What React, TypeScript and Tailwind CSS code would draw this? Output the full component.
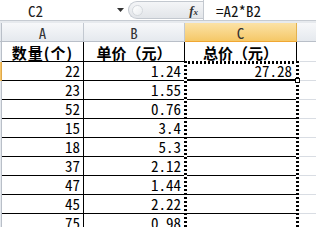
import React from "react";

const mono = "font-['Noto_Sans_Mono_CJK_SC','Liberation_Mono',monospace]";
const cjk = "font-['Noto_Sans_CJK_SC',sans-serif]";

const data = [
  ["22", "1.24", "27.28"],
  ["23", "1.55", ""],
  ["52", "0.76", ""],
  ["15", "3.4", ""],
  ["18", "5.3", ""],
  ["37", "2.12", ""],
  ["47", "1.44", ""],
  ["45", "2.22", ""],
  ["75", "0.98", ""],
];

function FormulaBar() {
  return (
    <div className="flex h-[21px] items-stretch border-b border-[#c6cbd2] bg-white">
      <div className={`flex w-[112px] items-center pl-[28px] text-[15px] leading-none text-[#222] ${mono}`}>
        C2
      </div>
      <div className="flex w-[16px] items-center justify-center">
        <svg width="7" height="4" viewBox="0 0 7 4">
          <path d="M0 0h7L3.5 4z" fill="#333" />
        </svg>
      </div>
      {/* collapsed splitter capsule + fx button */}
      <div className="my-[1px] flex w-[75px] items-center rounded-l-full border border-r-0 border-[#c3c8cf] bg-gradient-to-b from-[#f4f5f7] to-[#e2e5e9]">
        <div className="ml-[3px] h-[11px] w-[11px] rounded-full border border-[#d4d8dd] bg-gradient-to-br from-white to-[#e9ecef]" />
        <div className="flex-1" />
        <span className="mr-[5px] font-['Liberation_Serif',serif] text-[13px] font-bold italic leading-none text-[#333]">
          f<span className="text-[9px]">x</span>
        </span>
      </div>
      <div className="w-px bg-[#c3c8cf]" />
      <div className={`flex flex-1 items-center pl-[12px] text-[15px] leading-none text-[#111] ${mono}`}>
        =A2*B2
      </div>
    </div>
  );
}

function HeaderCell({ label, w, active }: { label: string; w: string; active?: boolean }) {
  return (
    <div
      className={`flex shrink-0 items-end justify-center border-r pb-[1px] text-[15px] leading-none ${mono} ${w} ${
        active
          ? "border-[#e3b24f] border-b-[#f0a732] bg-gradient-to-b from-[#fbe2a6] to-[#f5c866] text-[#333]"
          : "border-[#c2c8d0] border-b-[#b9bfc8] bg-gradient-to-b from-[#f7f8fa] to-[#e5e9ee] text-[#333]"
      } border-b`}
    >
      {label}
    </div>
  );
}

export default function App() {
  return (
    <div className="relative h-[227px] w-[316px] overflow-hidden bg-white">
      <FormulaBar />
      <div className="h-[2px] bg-[#e7eaee]" />

      {/* column headers */}
      <div className="flex h-[19px]">
        <div className="w-[2px] shrink-0 border-r border-b border-[#b9bfc8] bg-[#e5e9ee]" />
        <HeaderCell label="A" w="w-[82px]" />
        <HeaderCell label="B" w="w-[101px]" />
        <HeaderCell label="C" w="w-[112px]" active />
        <div className="flex-1 border-b border-[#b9bfc8] bg-gradient-to-b from-[#f7f8fa] to-[#e5e9ee]" />
      </div>

      {/* row 1: titles */}
      <div className={`flex h-[20px] text-[15px] font-bold leading-none text-black ${cjk}`}>
        <div className="w-[2px] shrink-0 border-r border-[#b9bfc8] bg-[#e5e9ee]" />
        <div className="flex w-[82px] shrink-0 items-end justify-center border-r border-b border-black pb-[1px] tracking-[1px]">
          数量(个)
        </div>
        <div className="flex w-[101px] shrink-0 items-end justify-center border-r border-b border-black pb-[1px]">
          单价（元）
        </div>
        <div className="flex w-[112px] shrink-0 items-end justify-center border-r border-b border-black pb-[1px]">
          总价（元）
        </div>
        <div className="flex-1 border-b border-[#d9dde3]" />
      </div>

      {data.map((r, i) => (
        <div key={i} className={`flex h-[19px] text-[15px] leading-none text-black ${mono}`}>
          <div
            className={`w-[2px] shrink-0 border-r ${
              i === 0 ? "border-[#e0a84a] bg-[#f5c569]" : "border-[#b9bfc8] bg-[#e5e9ee]"
            }`}
          />
          <div className="flex w-[82px] shrink-0 items-end justify-end border-r border-b border-black pb-[2px] pr-[3px]">
            {r[0]}
          </div>
          <div className="flex w-[101px] shrink-0 items-end justify-end border-r border-b border-black pb-[2px] pr-[3px]">
            {r[1]}
          </div>
          <div className="flex w-[112px] shrink-0 items-end justify-end border-b border-black pb-[2px] pr-[5px]">
            {r[2]}
          </div>
          <div className="flex-1 border-b border-[#d9dde3]" />
        </div>
      ))}

      {/* copy marquee over C2:C10 */}
      <div className="pointer-events-none absolute left-[184px] top-[61px] bottom-0 w-[116px]">
        <div className="absolute left-0 right-0 top-0 h-[3px] bg-[repeating-linear-gradient(to_right,#000_0_2px,#fff_2px_4px)]" />
        <div className="absolute left-0 top-0 bottom-0 w-[3px] bg-[repeating-linear-gradient(to_bottom,#000_0_2px,#fff_2px_4px)]" />
        <div className="absolute right-[1px] top-0 bottom-0 w-[3px] bg-[repeating-linear-gradient(to_bottom,#000_0_2px,#fff_2px_4px)]" />
        <div className="absolute left-[3px] right-[4px] top-[18px] h-px bg-black" />
        <div className="absolute right-0 top-[17px] h-[5px] w-[5px] border border-black bg-white" />
      </div>
    </div>
  );
}
